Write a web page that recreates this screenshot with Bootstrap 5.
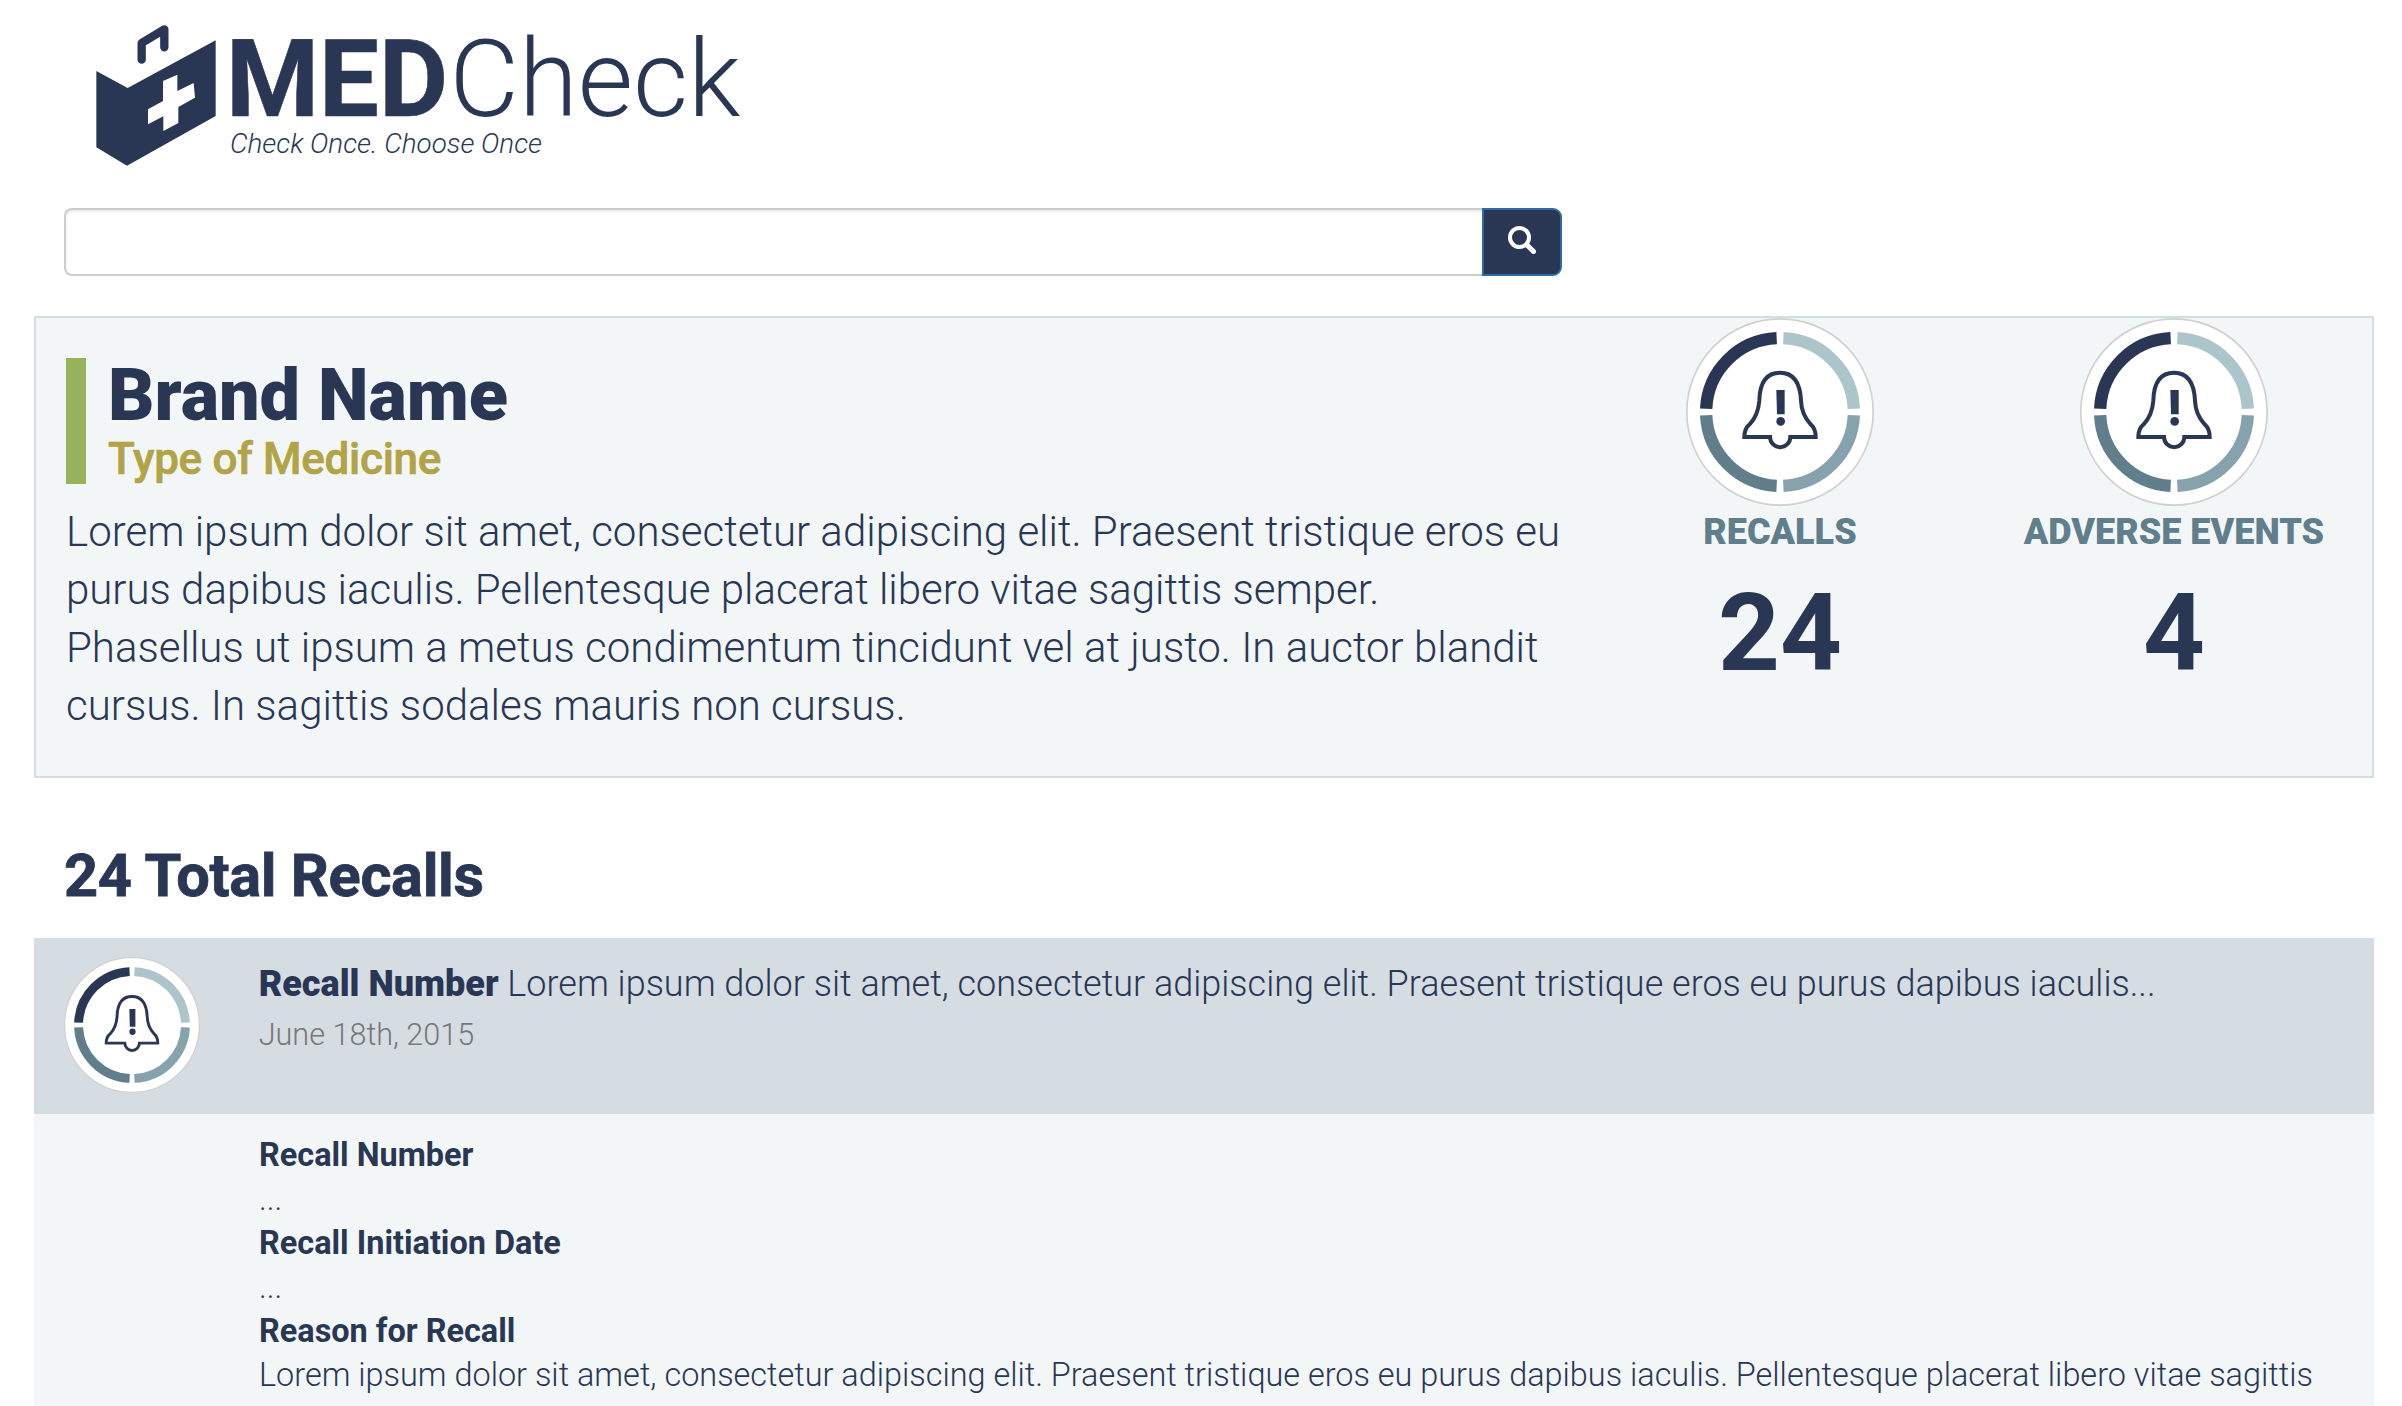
<!DOCTYPE html>
<html lang="en">
<head>
<meta charset="utf-8">
<title>MEDCheck</title>
<meta name="viewport" content="width=device-width, initial-scale=1">
<link href="https://cdn.jsdelivr.net/npm/bootstrap@5.3.0/dist/css/bootstrap.min.css" rel="stylesheet">
<style>
:root { --navy: #293755; --slate: #607e8b; --pale: #f2f6f7; --line: #d4dde2; }
html, body { height: 100%; overflow: hidden; }
body { font-family: Roboto, sans-serif; font-weight: 300; color: var(--navy); background: #fff; }
.page-wrap { padding: 0 28px 0 34px; }
.brand-logo { display: block; height: 208px; margin-left: 46px; width: 680px; }
.search-bar { width: 1498px; height: 68px; margin-left: 30px; }
.search-bar .form-control { border: 2px solid #ccc; border-right: 0; border-radius: 8px 0 0 8px; box-shadow: inset 0 2px 2px rgba(0,0,0,.075); }
.search-bar .btn { width: 80px; background: var(--navy); border: 2px solid #2a6ca5; border-radius: 0 9px 9px 0; padding: 0 0 4px; }
.summary { margin-top: 40px; height: 462px; background: var(--pale); border: 2px solid var(--line); }
.summary-text { width: 1547px; padding: 40px 20px 0 30px; }
.title-block { border-left: 20px solid #98b25c; padding-left: 22px; height: 126px; margin-bottom: 18.7px; }
.title-block h1 { font-size: 72px; line-height: 75px; font-weight: 900; margin: 0; }
.title-block h2 { font-size: 44px; line-height: 53px; font-weight: 500; margin: 0; color: #b1a346; letter-spacing: -.29px; -webkit-text-stroke: .7px #b1a346; }
.summary-text p { font-size: 42px; line-height: 58px; margin: 0; }
.stat { width: 394px; }
.stat svg { width: 188px; height: 188px; }
.stat-label { font-size: 36px; line-height: 40px; font-weight: 900; color: var(--slate); margin-top: 6.4px; }
.stat-value { font-size: 108px; line-height: 118px; font-weight: 700; margin-top: 21.6px; }
.list-title { font-size: 59.5px; line-height: 66px; font-weight: 700; margin: 64.5px 0 29.5px 30px; letter-spacing: -.3px; -webkit-text-stroke: .8px var(--navy); }
.recall-head { background: #d5dde3; height: 176px; padding: 20px 0 0 30px; }
.recall-head svg { width: 136px; height: 136px; flex: none; margin-top: -1px; }
.recall-text { padding-left: 58.7px; }
.recall-line { font-size: 36px; line-height: 52px; }
.recall-line strong { font-weight: 900; }
.recall-date { font-size: 30.6px; line-height: 44px; color: #777; margin-top: 3px; }
.recall-body { background: var(--pale); padding: 19px 10px 40px 225px; font-size: 32.43px; line-height: 44px; }
.recall-body dl, .recall-body dd { margin: 0; }
.recall-body dt { font-weight: 700; }
</style>
<script src="https://cdn.jsdelivr.net/npm/bootstrap@5.3.0/dist/js/bootstrap.bundle.min.js"></script>
</head>
<body>
<svg class="d-none">
  <symbol id="alert-bell" viewBox="-282 -282 564 564">
    <circle r="279.5" fill="#fff" stroke="#d0d0d0" stroke-width="5"/>
    <g fill="none" stroke-width="37">
      <path d="M-221.5-10A221.7 221.7 0 0 1-10-221.5" stroke="#293755"/>
      <path d="M10-221.5A221.7 221.7 0 0 1 221.5-10" stroke="#abc5cb"/>
      <path d="M221.5 10A221.7 221.7 0 0 1 10 221.5" stroke="#86a3ad"/>
      <path d="M-10 221.5A221.7 221.7 0 0 1-221.5 10" stroke="#607e8b"/>
    </g>
    <path d="M-30 75H-107C-107 59-103 47-91 37C-72 17-64-8-62-34C-61-81-47-118 0-118S61-81 63-34C64-8 73 17 92 37C103 47 107 59 107 75H31A30.500 30.500 0 0 1-30 75Z" fill="none" stroke="#293755" stroke-width="12"/>
    <path d="M-11-66H14V7H-9Z" fill="#293755"/><circle cx="2" cy="28" r="13" fill="#293755"/>
  </symbol>
</svg>
<div class="container-fluid page-wrap">
  <header>
    <svg class="brand-logo" viewBox="80 0 680 208" fill="#293755" role="img" aria-label="MEDCheck">
      <g transform="translate(80 10) scale(.33333)">
        <path d="M49 183L143 234L407 91V318L141 467L49 412Z"/>
        <path d="M249 213L292 194V243L341 219L345 263L295 291V339L250 363V319L204 343V298L249 273Z" fill="#fff"/>
        <path d="M185 149V99L253 58V112" fill="none" stroke="#293755" stroke-width="25" stroke-linecap="round" stroke-linejoin="round"/>
      </g>
      <text x="226" y="116" font-size="107.400" font-weight="700" textLength="222" lengthAdjust="spacingAndGlyphs" stroke="#293755" stroke-width=".6">MED</text>
      <text x="449.500" y="116" font-size="107.400" font-weight="300" textLength="291" lengthAdjust="spacingAndGlyphs">Check</text>
      <text x="230" y="152.700" font-size="28.500" font-style="italic" font-weight="300" textLength="312" lengthAdjust="spacingAndGlyphs">Check Once. Choose Once</text>
    </svg>
    <form class="input-group search-bar">
      <input type="text" class="form-control" aria-label="Search">
      <button type="button" class="btn d-flex align-items-center justify-content-center" aria-label="Submit search">
        <svg width="28" height="28" viewBox="0 0 28 28" fill="none" stroke="#fff"><circle cx="11.500" cy="11.500" r="9.500" stroke-width="4"/><path d="M19 19L25.500 25.500" stroke-width="5" stroke-linecap="round"/></svg>
      </button>
    </form>
  </header>
  <main>
    <section class="summary d-flex">
      <div class="summary-text">
        <div class="title-block"><h1>Brand Name</h1><h2>Type of Medicine</h2></div>
        <p>Lorem ipsum dolor sit amet, consectetur adipiscing elit. Praesent tristique eros eu purus dapibus iaculis. Pellentesque placerat libero vitae sagittis semper. Phasellus ut ipsum a metus condimentum tincidunt vel at justo. In auctor blandit cursus. In sagittis sodales mauris non cursus.</p>
      </div>
      <div class="stat d-flex flex-column align-items-center">
        <svg><use href="#alert-bell"/></svg>
        <div class="stat-label">RECALLS</div><div class="stat-value">24</div>
      </div>
      <div class="stat d-flex flex-column align-items-center">
        <svg><use href="#alert-bell"/></svg>
        <div class="stat-label">ADVERSE EVENTS</div><div class="stat-value">4</div>
      </div>
    </section>
    <h2 class="list-title">24 Total Recalls</h2>
    <section>
      <div class="recall-head d-flex">
        <svg><use href="#alert-bell"/></svg>
        <div class="recall-text">
          <div class="recall-line"><strong>Recall Number</strong> Lorem ipsum dolor sit amet, consectetur adipiscing elit. Praesent tristique eros eu purus dapibus iaculis...</div>
          <div class="recall-date">June 18th, 2015</div>
        </div>
      </div>
      <div class="recall-body">
        <dl>
          <dt>Recall Number</dt><dd>...</dd>
          <dt>Recall Initiation Date</dt><dd>...</dd>
          <dt>Reason for Recall</dt>
          <dd>Lorem ipsum dolor sit amet, consectetur adipiscing elit. Praesent tristique eros eu purus dapibus iaculis. Pellentesque placerat libero vitae sagittis</dd>
        </dl>
      </div>
    </section>
  </main>
</div>
</body>
</html>
